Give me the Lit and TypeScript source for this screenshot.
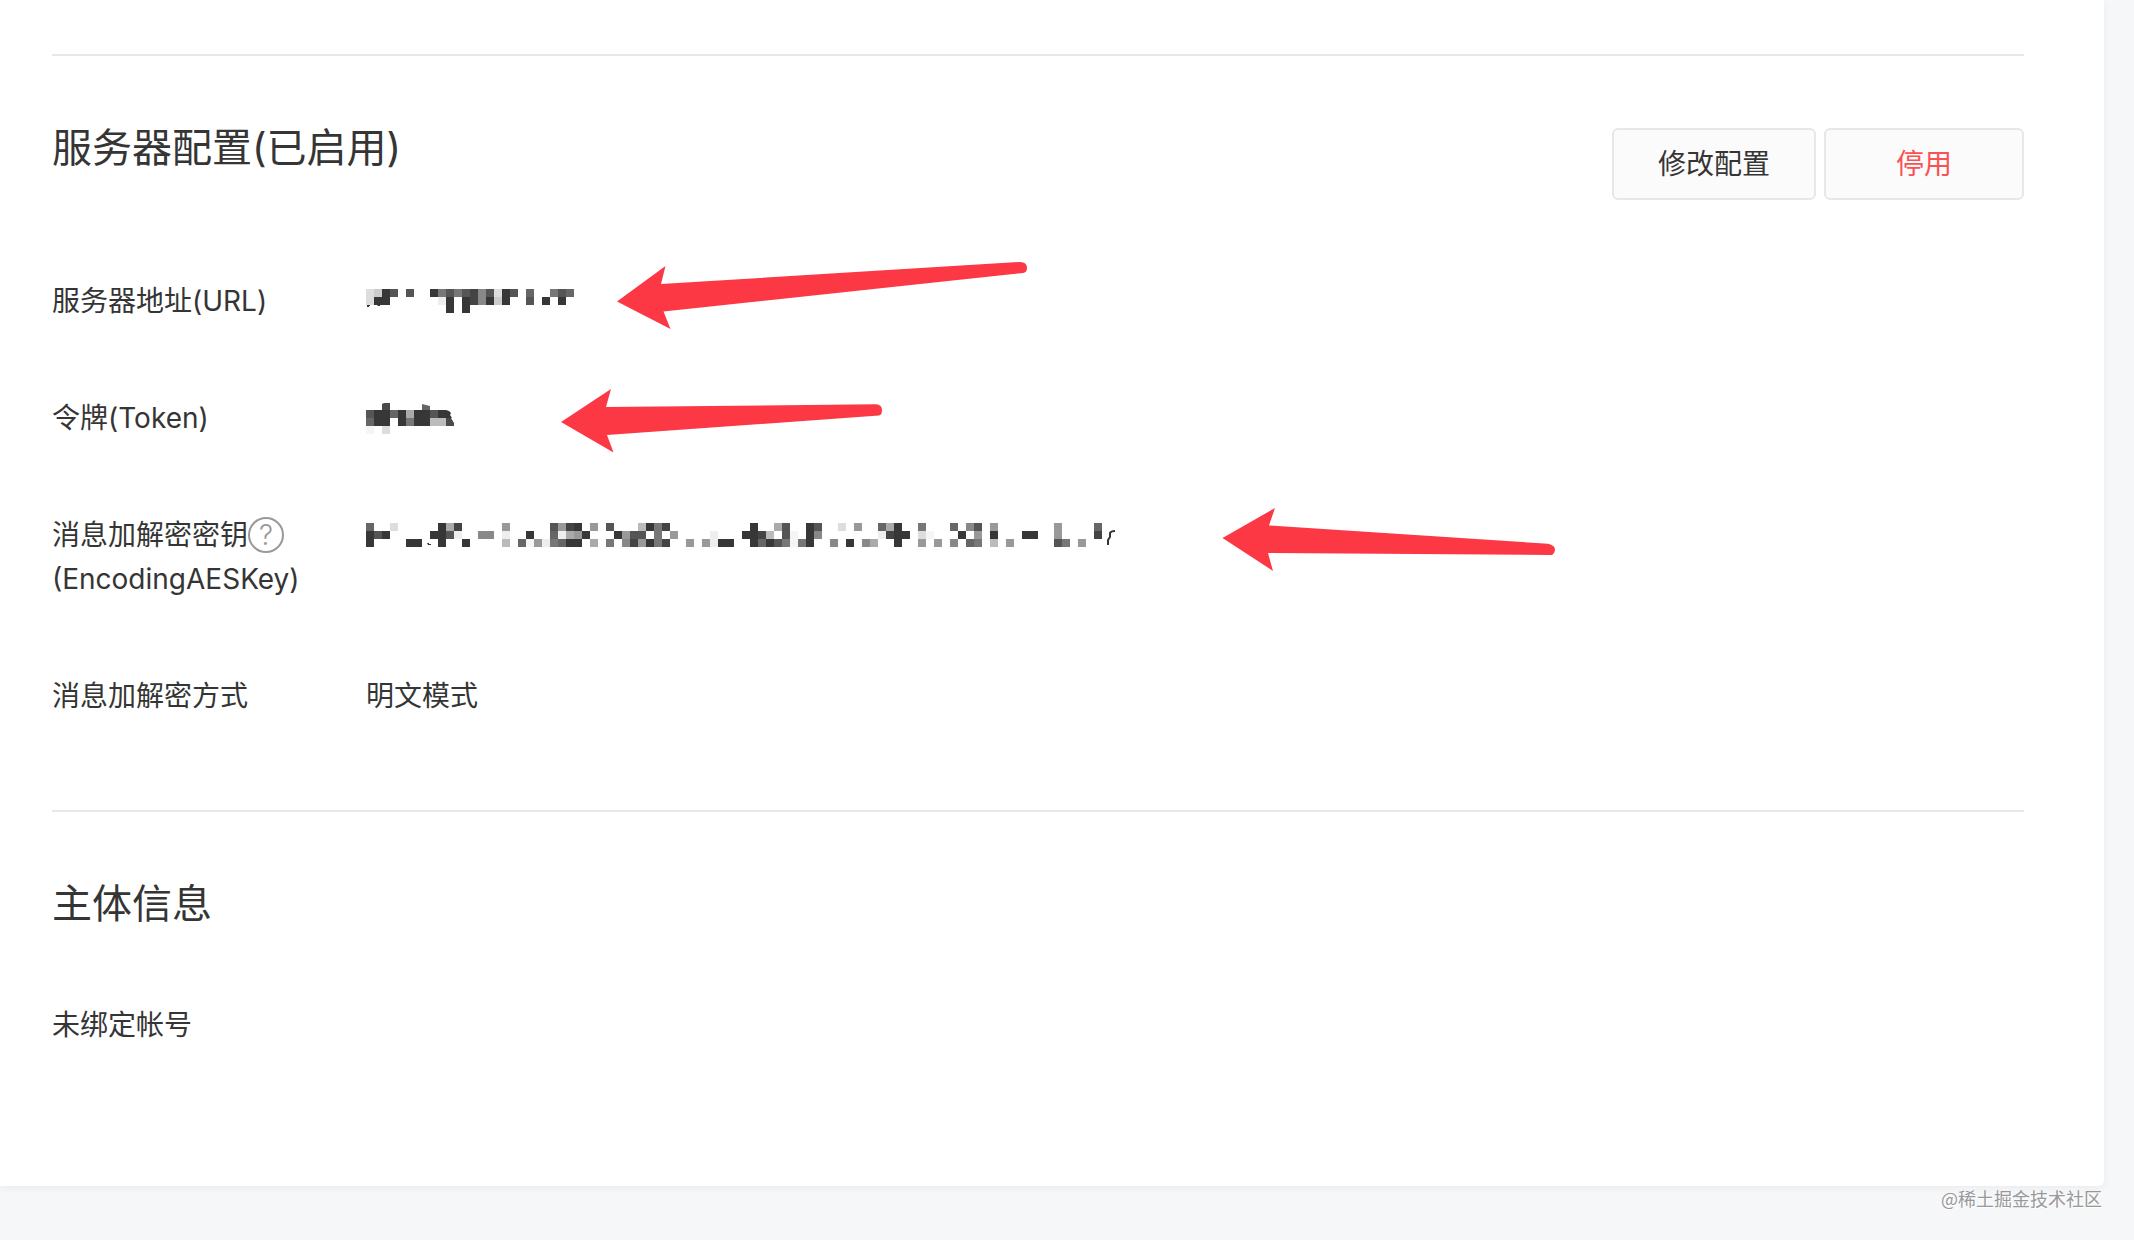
import { LitElement, html, css, svg } from "lit";
import { customElement, property } from "lit/decorators.js";

/** Size in pixels of one block of a masked value. */
const CELL = 8;

/**
 * Each line is a row of blocks, written as "column:levels" runs.
 * A level is a hex digit of grey, from 3 (text colour) to f (almost white).
 */
const MASKS: Record<string, string[]> = {
  url: [
    "0:dc35 5:5 8:37575485d35 20:6 23:756",
    "0:d33 9:e3 12:3483c3 20:5 22:3 24:3",
    "10:3 12:3",
  ],
  token: ["0:53363a3353", "0:633 4:3733bb", "0:f 2:d"],
  key: [
    "0:6 3:d 9:3a4 17:9 23:5943 28:9 30:5 34:b374 48:3 51:a5 55:35 59:d 61:9 64:6a3 69:7 73:6 75:85 78:9 86:9 91:6",
    "0:353 8:335e 14:88 17:e 20:3 23:6ea93 31:3955 36:7 38:9 43:e 47:334b 52:5f 55:38 64:e433 69:df 74:3 76:9 78:3 82:33 86:9 91:4",
    "0:3 5:33 9:3 12:3 17:b 19:6f9e7633 28:a 30:7 32:849374 40:9 42:9e33 48:36357f73 58:8 60:3 62:8a 66:3 69:9 71:9 73:8 75:67 78:b 80:9 86:57 89:9",
  ],
};

/** Leftover strokes of the original text that show beside the blocks. */
const STROKES: Record<string, unknown> = {
  url: svg`<path fill="#353535" d="M1 16h3v1h-1v1h-2zM11 16h3v1h-2z"/>`,
  token: svg`
    <path fill="#4a4a4a" d="M16 0V-6L18 -7H24V0Z"/>
    <path fill="#666" d="M56 0V-6L64 -4V0Z"/>
    <path fill="#353535" d="M80 0L83 1L85 3L84 5L86 8H80Z"/>
    <path fill="#4a4a4a" d="M80 8H85L88 13V16H80Z"/>`,
  key: svg`
    <path fill="#353535" d="M61 20h2v1h2v1h-3z"/>
    <path fill="none" stroke="#353535" stroke-width="2" d="M742 22V17L744 14V10Q745 8 749 8"/>`,
};

@customElement("masked-value")
export class MaskedValue extends LitElement {
  @property() name = "url";

  static styles = css`
    :host {
      display: flex;
    }
    .mask {
      display: block;
      overflow: visible;
    }
  `;

  render() {
    const rows = MASKS[this.name] ?? [];
    let width = 0;
    const cells = rows.flatMap((row, y) =>
      row.split(" ").flatMap((run) => {
        const [start, levels] = run.split(":");
        return [...levels].map((level, i) => {
          const x = (Number(start) + i) * CELL;
          width = Math.max(width, x + CELL);
          const fill = level === "3" ? "#373737" : level === "f" ? "#f5f5f5" : `#${level.repeat(3)}`;
          return svg`<rect x=${x} y=${y * CELL} width=${CELL} height=${CELL} fill=${fill}></rect>`;
        });
      })
    );
    return html`<svg class="mask" width=${width} height=${CELL * 3} role="img" aria-label="已隐藏">
      ${cells}${STROKES[this.name]}
    </svg>`;
  }
}

@customElement("app-root")
export class AppRoot extends LitElement {
  static styles = css`
    :host {
      display: block;
      min-height: 100vh;
      background: #f6f7f9;
      color: #353535;
      font-family: Inter, "Noto Sans CJK SC", sans-serif;
      font-size: 28px;
      line-height: 44px;
    }
    .card {
      position: relative;
      margin-right: 30px;
      padding: 54px 80px 139px 52px;
      background: #fff;
      border-radius: 0 0 6px 0;
      box-shadow: 0 2px 8px rgba(0, 0, 0, 0.05);
    }
    .section {
      border-top: 2px solid #e7e7eb;
      padding-top: 72px;
    }
    .section + .section {
      margin-top: 92px;
    }
    .head {
      display: flex;
      justify-content: space-between;
      align-items: flex-start;
      margin-bottom: 79px;
    }
    .title {
      margin: 0;
      font-size: 40px;
      line-height: 40px;
      font-weight: 400;
    }
    .actions {
      display: flex;
      gap: 8px;
    }
    .btn {
      box-sizing: border-box;
      min-width: 200px;
      height: 72px;
      padding: 0 44px;
      border: 2px solid #e4e8eb;
      border-radius: 6px;
      background: #fbfbfb;
      color: inherit;
      font: inherit;
      cursor: pointer;
    }
    .danger {
      color: #fa5155;
    }
    .fields {
      display: grid;
      gap: 73px;
      margin: 0;
    }
    .field {
      display: grid;
      grid-template-columns: 314px 1fr;
    }
    .value {
      margin: 0;
    }
    .masked {
      padding-top: 10px;
    }
    .masked.short {
      padding-top: 14px;
    }
    .line {
      display: flex;
      align-items: center;
      height: 44px;
    }
    .help {
      box-sizing: border-box;
      width: 36px;
      height: 36px;
      padding: 0;
      border: 2px solid #999;
      border-radius: 50%;
      background: none;
      color: #999;
      font: inherit;
      font-weight: 300;
      line-height: 32px;
      cursor: pointer;
    }
    .text {
      margin: 0;
    }
    .marks {
      position: absolute;
      top: 0;
      left: 0;
      width: 100%;
      height: 100%;
      pointer-events: none;
      fill: #fc3845;
    }
    .credit {
      margin: 0;
      padding-right: 32px;
      color: #999;
      font-family: "Noto Sans CJK SC", sans-serif;
      font-size: 18px;
      line-height: 24px;
      text-align: right;
      text-shadow: 1px 1px 0 #fff;
    }
  `;

  render() {
    return html`
      <main class="card">
        <section class="section">
          <header class="head">
            <h2 class="title">服务器配置(已启用)</h2>
            <div class="actions">
              <button class="btn" type="button">修改配置</button>
              <button class="btn danger" type="button">停用</button>
            </div>
          </header>
          <dl class="fields">
            <div class="field">
              <dt>服务器地址(URL)</dt>
              <dd class="value masked"><masked-value name="url"></masked-value></dd>
            </div>
            <div class="field">
              <dt>令牌(Token)</dt>
              <dd class="value masked short"><masked-value name="token"></masked-value></dd>
            </div>
            <div class="field">
              <dt>
                <div class="line">消息加解密密钥<button class="help" type="button">?</button></div>
                (EncodingAESKey)
              </dt>
              <dd class="value masked"><masked-value name="key"></masked-value></dd>
            </div>
            <div class="field">
              <dt>消息加解密方式</dt>
              <dd class="value">明文模式</dd>
            </div>
          </dl>
        </section>
        <section class="section">
          <header class="head"><h2 class="title">主体信息</h2></header>
          <p class="text">未绑定帐号</p>
        </section>
        <svg class="marks" aria-hidden="true">
          <path d="M617 301.5L665.5 266L661 284L1020 262Q1027 262 1027 268Q1027 272.5 1023 273L663.5 311.5L670.5 329Z" />
          <path d="M561 422L611 389L606 407L876 404.3Q882 405 882 410Q882 415 879 415.5L607 435L613.5 452.5Z" />
          <path d="M1222.5 538L1275 508L1269 525.5L1548 543.7Q1555 545 1555 550Q1554 555 1551 555L1268 553L1273 571Z" />
        </svg>
      </main>
      <p class="credit">@稀土掘金技术社区</p>
    `;
  }
}
